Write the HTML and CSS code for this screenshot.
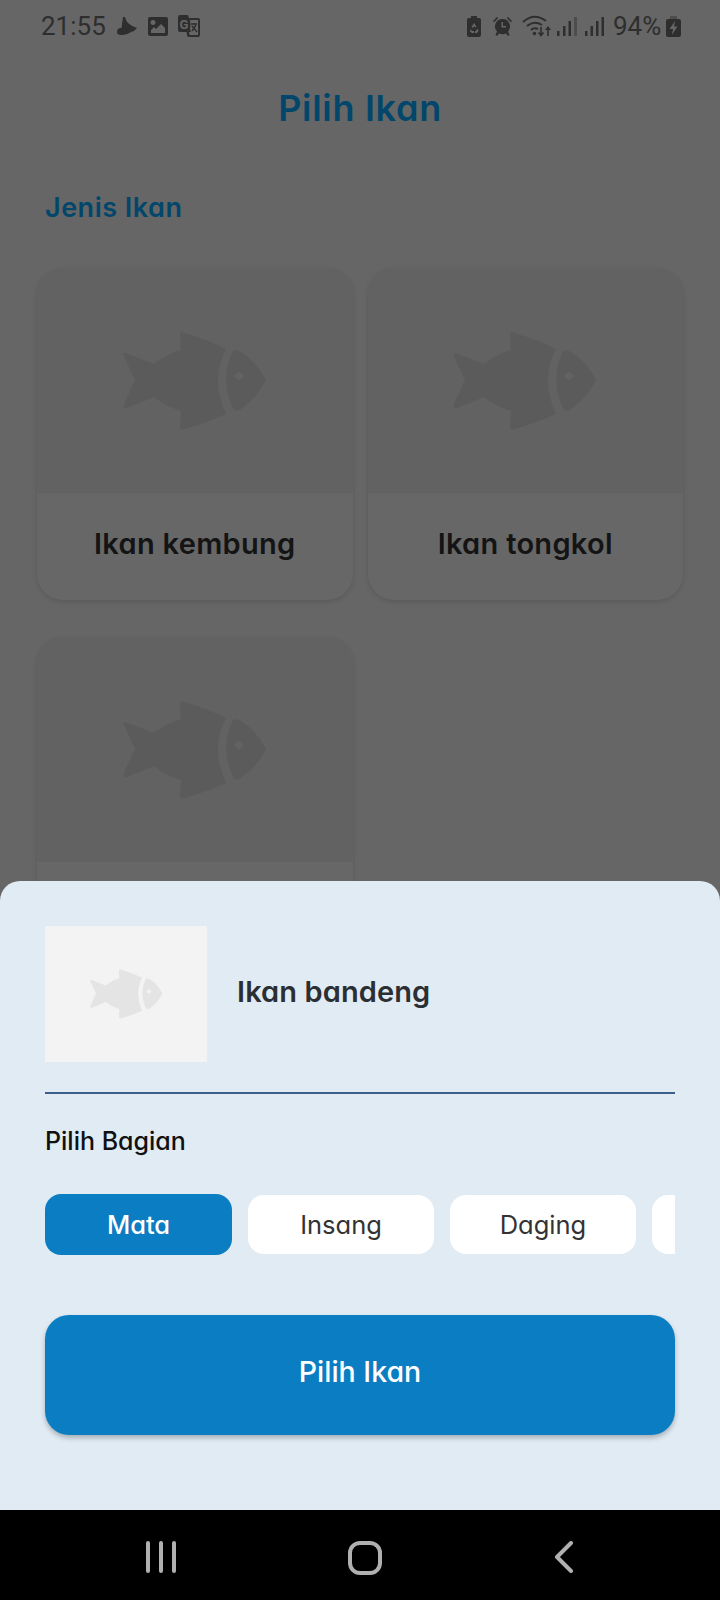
FILE: index.html
```html
<!DOCTYPE html>
<html lang="en">

<head>
  <meta charset="UTF-8">
  <title>Pilih Ikan</title>
  <link rel="stylesheet" href="styles.css">
</head>

<body>
  <svg class="defs" width="0" height="0">
    <symbol id="fish" viewBox="0 0 144 98">
      <path fill-rule="evenodd" d="M0 22Q2 20 5 22L31 32Q44 22 58 18L57 3Q57 -1 62 1Q85 8 103 17Q87 48 103 82Q85 90 62 97Q57 99 57 94L58 79Q44 75 31 65L4 76Q0 77 1 72L12 48Z
        M110 19Q114 17 118 20Q134 30 143 48Q134 66 118 77Q114 80 111 78Q96 48 110 19Z
        M116 40a4 4 0 1 0 .01 0Z" />
    </symbol>
  </svg>

  <div class="screen">
    <div class="status-bar">
      <div class="status-left">
        <span class="clock">21:55</span>
        <svg class="ico-moon" viewBox="0 0 20 18"><path d="M6 0H8Q9 4 11 6Q14 9 20 11Q18 14 14 15Q10 18 4 18Q0 18 0 15Q0 11 4 11Q5 11 5 7Z" /></svg>
        <svg class="ico-image" viewBox="0 0 20 19"><path fill-rule="evenodd" d="M2 0H18Q20 0 20 2V17Q20 19 18 19H2Q0 19 0 17V2Q0 0 2 0ZM3 13V16H17V11L13 7L8 12L6 10ZM5 3a2.500 2.500 0 1 0 .01 0Z" /></svg>
        <svg class="ico-translate" viewBox="0 0 22 22">
          <path d="M2 0H10L11 3H20Q22 3 22 5V20Q22 22 20 22H11Q9 22 9 20L8.500 17H2Q0 17 0 15V2Q0 0 2 0Z" />
          <path class="cut" d="M12 5H20V20H11.500L11 17H13L12 14Q13 10 12 5Z" />
          <text x="1.500" y="13.500" class="g-mark">G</text>
          <path class="x-mark" d="M13 9H19M16 8V9.500M14 16L18 10M14 11L19 17" />
        </svg>
      </div>
      <div class="status-right">
        <svg class="ico-batsave" viewBox="0 0 14 21">
          <path fill-rule="evenodd" d="M4 0H10V2H12Q14 2 14 4V19Q14 21 12 21H2Q0 21 0 19V4Q0 2 2 2H4ZM7 7L4.500 11L6 12L7 10L8 11.500L9.500 10.500ZM3.500 13L3 15.500L5 17H7V15H5ZM11 13L9 14L9.500 15H8V17H10L11.500 15Z" />
        </svg>
        <svg class="ico-alarm" viewBox="0 0 19 20">
          <path fill-rule="evenodd" d="M9.500 3a7.500 7.500 0 0 1 5.500 12.600L16.500 19L15 20L13 17.500Q9.500 19 6 17.500L4 20L2.500 19L4 15.600A7.500 7.500 0 0 1 9.500 3ZM8.500 6V11.500H13V10H10V6Z" />
          <path d="M0 5L4 1L5.200 2L1.200 6.200ZM19 5L15 1L13.800 2L17.800 6.200Z" />
        </svg>
        <svg class="ico-wifi" viewBox="0 0 29 22" fill="none" stroke="#2e2e2e">
          <path stroke-width="2" d="M1 7Q12 -3 24 6M5 11Q12 5 20 10M9 15Q12 12 16 14" />
          <circle cx="12.500" cy="18.500" r="1.800" fill="#2e2e2e" stroke="none" />
          <path stroke-width="1.600" d="M19 12V20M16.500 17.500L19 20.500L21.500 17.500M26 21V14" />
          <path d="M26 11L29 15H23Z" fill="#2e2e2e" stroke="none" />
        </svg>
        <svg class="ico-signal" viewBox="0 0 20 19">
          <path class="bar-off" d="M17 0H20V19H17Z" />
          <path d="M0 14H2.500V19H0ZM6 9H8.500V19H6ZM11.500 4H14V19H11.500Z" />
        </svg>
        <svg class="ico-signal" viewBox="0 0 20 19">
          <path d="M0 14H2.500V19H0ZM5.500 9H8V19H5.500ZM11 4H13.500V19H11ZM16.500 0H19V19H16.500Z" />
        </svg>
        <span class="battery-pct">94%</span>
        <svg class="ico-battery" viewBox="0 0 15 21">
          <path class="bar-off" d="M4 0H11V3H4Z" />
          <path fill-rule="evenodd" d="M2 3H13Q15 3 15 5V19Q15 21 13 21H2Q0 21 0 19V5Q0 3 2 3ZM9 5L3.500 13H7L6 19L11.500 10.500H8Z" />
        </svg>
      </div>
    </div>

    <div class="page">
      <h1 class="page-title">Pilih Ikan</h1>
      <h2 class="section-title">Jenis Ikan</h2>

      <div class="fish-grid">
        <div class="fish-card">
          <div class="fish-card-image"><svg class="fish-icon"><use href="#fish" /></svg></div>
          <div class="fish-card-name">Ikan kembung</div>
        </div>
        <div class="fish-card">
          <div class="fish-card-image"><svg class="fish-icon"><use href="#fish" /></svg></div>
          <div class="fish-card-name">Ikan tongkol</div>
        </div>
        <div class="fish-card">
          <div class="fish-card-image"><svg class="fish-icon"><use href="#fish" /></svg></div>
          <div class="fish-card-name"></div>
        </div>
      </div>

      <div class="sheet">
        <div class="sheet-head">
          <div class="thumb"><svg class="thumb-fish"><use href="#fish" /></svg></div>
          <div class="sheet-name">Ikan bandeng</div>
        </div>
        <div class="divider"></div>
        <div class="part-label">Pilih Bagian</div>
        <div class="chips">
          <button class="chip chip-active">Mata</button>
          <button class="chip">Insang</button>
          <button class="chip">Daging</button>
          <button class="chip"></button>
        </div>
        <button class="submit">Pilih Ikan</button>
      </div>
    </div>

    <div class="nav-bar">
      <svg class="nav-recent" viewBox="0 0 30 32"><path d="M2 2V30M15 2V30M28 2V30" /></svg>
      <svg class="nav-home" viewBox="0 0 34 34"><rect x="2" y="2" width="30" height="30" rx="10" /></svg>
      <svg class="nav-back" viewBox="0 0 20 32"><path d="M17 2L3 16L17 30" /></svg>
    </div>
  </div>
</body>

</html>
```

FILE: styles.css
```css
* {
  box-sizing: border-box;
}

body {
  margin: 0;
  font-family: Inter, "Open Sans", sans-serif;
  font-feature-settings: "cv11";
}

.defs {
  position: absolute;
}

.screen {
  display: flex;
  flex-direction: column;
  width: 720px;
  height: 1600px;
  background: #666;
}

/* status bar */
.status-bar {
  display: flex;
  justify-content: space-between;
  align-items: center;
  flex: none;
  height: 52px;
  padding: 0 39px 0 41px;
  color: #2e2e2e;
  font-family: Roboto, sans-serif;
  font-size: 26px;
}

.status-bar svg {
  display: block;
  fill: #2e2e2e;
}

.status-left,
.status-right {
  display: flex;
  align-items: center;
}

.clock {
  width: 76px;
}

.ico-moon {
  width: 20px;
  height: 18px;
  margin-right: 11px;
}

.ico-image {
  width: 20px;
  height: 19px;
  margin-right: 10px;
}

.ico-translate {
  width: 22px;
  height: 22px;
}

.ico-translate .cut {
  fill: #666;
}

.g-mark {
  fill: #666;
  font-family: Roboto, sans-serif;
  font-size: 13px;
  font-weight: 700;
}

.x-mark {
  fill: none;
  stroke: #2e2e2e;
  stroke-width: 1.4;
}

.ico-batsave {
  width: 14px;
  height: 21px;
  margin-right: 12px;
}

.ico-alarm {
  width: 19px;
  height: 20px;
  margin-right: 10px;
}

.ico-wifi {
  width: 29px;
  height: 22px;
  margin-right: 6px;
}

.status-bar .ico-wifi {
  fill: none;
}

.ico-signal {
  width: 20px;
  height: 19px;
  margin-right: 8px;
}

.bar-off {
  opacity: 0.45;
}

.battery-pct {
  width: 53px;
}

.ico-battery {
  width: 15px;
  height: 21px;
}

/* page behind the sheet */
.page {
  position: relative;
  flex: 1;
  overflow: hidden;
}

.page-title {
  margin: 34px 0 0;
  color: #02466c;
  font-size: 36px;
  font-weight: 600;
  letter-spacing: 0.7px;
  line-height: 44px;
  text-align: center;
}

.section-title {
  margin: 62px 0 0 45px;
  color: #02466c;
  font-size: 27px;
  font-weight: 600;
  letter-spacing: 0.5px;
  line-height: 32px;
}

.fish-grid {
  display: grid;
  grid-template-columns: 1fr 1fr;
  gap: 37px 15px;
  margin-top: 44px;
  padding: 0 37px;
}

.fish-card {
  height: 332px;
  border-radius: 26px;
  background: #676767;
  box-shadow: 0 2px 5px rgba(0, 0, 0, 0.12);
  overflow: hidden;
}

.fish-card-image {
  display: flex;
  justify-content: center;
  align-items: center;
  height: 225px;
  background: #626262;
}

.fish-icon {
  width: 144px;
  height: 98px;
  fill: #5b5b5b;
}

.fish-card-name {
  padding-top: 33px;
  color: #141414;
  font-size: 29px;
  font-weight: 600;
  letter-spacing: 0.3px;
  line-height: 36px;
  text-align: center;
}

/* bottom sheet */
.sheet {
  position: absolute;
  left: 0;
  right: 0;
  bottom: 0;
  height: 629px;
  padding: 45px 45px 0;
  border-radius: 20px 20px 0 0;
  background: #e0ebf4;
}

.sheet-head {
  display: flex;
  align-items: center;
  gap: 30px;
}

.thumb {
  display: flex;
  justify-content: center;
  align-items: center;
  width: 162px;
  height: 136px;
  background: #f3f3f3;
}

.thumb-fish {
  width: 73px;
  height: 50px;
  fill: #e4e4e4;
}

.sheet-name {
  padding-bottom: 6px;
  color: #2b2f33;
  font-size: 29px;
  font-weight: 600;
  letter-spacing: 0.1px;
}

.divider {
  height: 2px;
  margin-top: 30px;
  background: #3d5f8c;
}

.part-label {
  margin-top: 31px;
  color: #111;
  font-size: 25px;
  font-weight: 500;
  line-height: 32px;
}

.chips {
  display: flex;
  align-items: center;
  gap: 16px;
  height: 61px;
  margin-top: 37px;
  overflow: hidden;
}

.chip {
  flex: none;
  width: 186px;
  height: 59px;
  padding: 0;
  border: 0;
  border-radius: 16px;
  background: #fff;
  color: #333;
  font-family: inherit;
  font-feature-settings: inherit;
  font-size: 25.500px;
}

.chip-active {
  width: 187px;
  height: 61px;
  background: #0b7dc2;
  color: #fff;
  font-weight: 500;
}

.submit {
  display: block;
  width: 100%;
  height: 120px;
  margin-top: 60px;
  padding: 0 0 8px;
  border: 0;
  border-radius: 24px;
  background: #0b7dc2;
  box-shadow: 0 3px 5px rgba(0, 0, 0, 0.25);
  color: #fff;
  font-family: inherit;
  font-feature-settings: inherit;
  font-size: 28.500px;
  font-weight: 500;
}

/* android nav */
.nav-bar {
  display: flex;
  justify-content: space-between;
  flex: none;
  height: 90px;
  padding: 31px 146px 0 146px;
  background: #000;
}

.nav-bar svg {
  display: block;
  fill: none;
  stroke: #b0b0b0;
  stroke-linecap: round;
  stroke-linejoin: round;
  stroke-width: 4;
}

.nav-recent {
  width: 30px;
  height: 32px;
}

.nav-home {
  width: 34px;
  height: 34px;
}

.nav-back {
  width: 20px;
  height: 32px;
}
```
